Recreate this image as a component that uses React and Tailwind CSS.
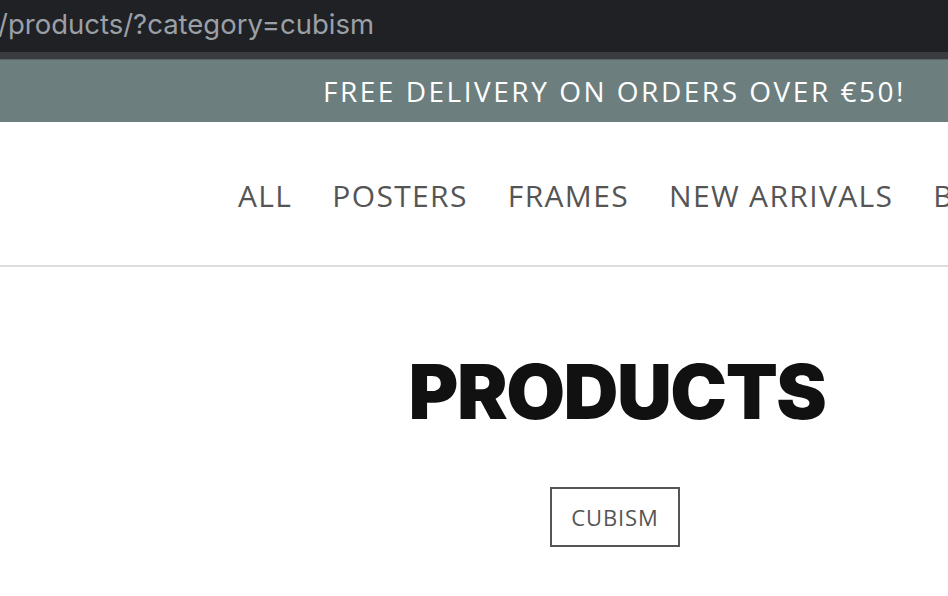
export default function App() {
  return (
    <div className="w-[948px] h-[596px] overflow-hidden bg-white relative">
      <div className="h-[52px] bg-[#202124] flex items-center overflow-hidden">
        <span className="text-[27.5px] text-[#9aa0a6] -ml-[2px] leading-none pb-[2px] whitespace-nowrap" style={{ fontFamily: "Inter, 'Liberation Sans', sans-serif" }}>
          /products/?category=cubism
        </span>
      </div>
      <div className="h-[7px] bg-[#3a3b3e]" />
      <div className="h-[1px] bg-[#5c6667]" />
      <div className="h-[62px] bg-[#6d7e7e] flex items-center justify-end pr-[42px]">
        <span className="text-white text-[28px] tracking-[0.09em] leading-none whitespace-nowrap" style={{ fontFamily: "'Open Sans', 'Liberation Sans', sans-serif" }}>
          FREE DELIVERY ON ORDERS OVER €50!
        </span>
      </div>
      <div className="h-[145px] border-b-2 border-[#dddddd] flex items-center pl-[238px] whitespace-nowrap overflow-hidden">
        <nav className="flex gap-[40px] text-[30px] text-[#555555] leading-none tracking-[0.045em] pt-[4px]" style={{ fontFamily: "'Open Sans', 'Liberation Sans', sans-serif" }}>
          <span>ALL</span>
          <span>POSTERS</span>
          <span>FRAMES</span>
          <span>NEW ARRIVALS</span>
          <span>BESTSELLERS</span>
        </nav>
      </div>
      <div className="flex flex-col items-center pl-[286px]">
        <h1 className="mt-[86px] text-[76px] font-black leading-none text-[#111111] tracking-[-0.02em]" style={{ fontFamily: "Inter, 'Liberation Sans', sans-serif" }}>
          PRODUCTS
        </h1>
        <div className="mt-[58px] -ml-[4px] border-2 border-[#555555] w-[130px] h-[60px] flex items-center justify-center text-[22px] text-[#555555] tracking-[0.04em]" style={{ fontFamily: "'Open Sans', 'Liberation Sans', sans-serif" }}>
          CUBISM
        </div>
      </div>
    </div>
  );
}
